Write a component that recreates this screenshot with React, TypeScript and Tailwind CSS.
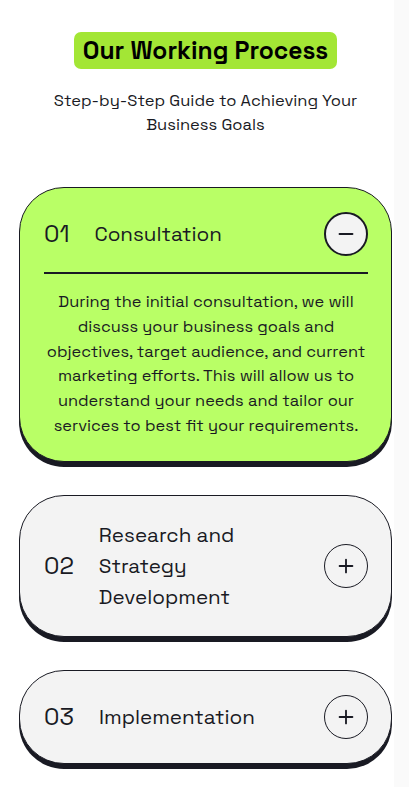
import { Minus, Plus } from "lucide-react";

interface Step {
  num: string;
  title: string;
  body?: string;
  open?: boolean;
}

const STEPS: Step[] = [
  {
    num: "01",
    title: "Consultation",
    open: true,
    body: "During the initial consultation, we will discuss your business goals and objectives, target audience, and current marketing efforts. This will allow us to understand your needs and tailor our services to best fit your requirements.",
  },
  { num: "02", title: "Research and Strategy Development" },
  { num: "03", title: "Implementation" },
];

function ToggleButton({ open }: { open?: boolean }) {
  return (
    <div
      className={`flex h-[44px] w-[44px] shrink-0 items-center justify-center rounded-full border-[#191a23] bg-[#f3f3f3] ${
        open ? "border-2" : "border-[1.5px]"
      }`}
    >
      {open ? (
        <Minus className="h-[22px] w-[22px] text-[#191a23]" strokeWidth={2.2} />
      ) : (
        <Plus className="h-[22px] w-[22px] text-[#191a23]" strokeWidth={2} />
      )}
    </div>
  );
}

function StepCard({ step }: { step: Step }) {
  return (
    <div
      className={`rounded-[45px] border border-[#191a23] pl-[24px] pr-[23px] shadow-[0_5px_0_0_#191a23] ${
        step.open ? "bg-[#b9ff66] pt-[24px] pb-[22px]" : "bg-[#f3f3f3] pt-[24px] pb-[23.5px]"
      }`}
    >
      <div className="flex items-center gap-[25px]">
        <span className="shrink-0 text-[24px] leading-none text-[#191a23]">
          {step.num}
        </span>
        <span className="w-[190px] text-[20.6px] leading-[31px] text-[#191a23]">
          {step.title}
        </span>
        <div className="ml-auto">
          <ToggleButton open={step.open} />
        </div>
      </div>
      {step.open && (
        <>
          <div className="mt-[16px] h-[2px] bg-[#191a23]" />
          <p className="mt-[16px] text-center text-[16.4px] leading-[24.8px] text-[#191a23]">
            {step.body}
          </p>
        </>
      )}
    </div>
  );
}

export default function App() {
  return (
    <div className="flex min-h-[787px] bg-white" style={{ fontFamily: '"Space Grotesk", Inter, "DejaVu Sans", sans-serif' }}>
      <div className="w-[394px] shrink-0 overflow-hidden">
        <div className="w-[411px] pt-[32px] pb-[24px]">
          <div className="flex justify-center">
            <h2 className="rounded-[7px] bg-[#a3e635] px-[9px] py-[3px] text-[24.6px] font-semibold leading-[31px] text-[#000]">
              Our Working Process
            </h2>
          </div>
          <p className="mx-auto mt-[20px] w-[340px] text-center text-[16.5px] leading-[24px] text-[#191a23]">
            Step-by-Step Guide to Achieving Your Business Goals
          </p>
          <div className="mx-[19px] mt-[50px] flex flex-col gap-[33px]">
            {STEPS.map((s) => (
              <StepCard key={s.num} step={s} />
            ))}
          </div>
        </div>
      </div>
      <div className="flex-1 bg-[#fafafa]" />
    </div>
  );
}
